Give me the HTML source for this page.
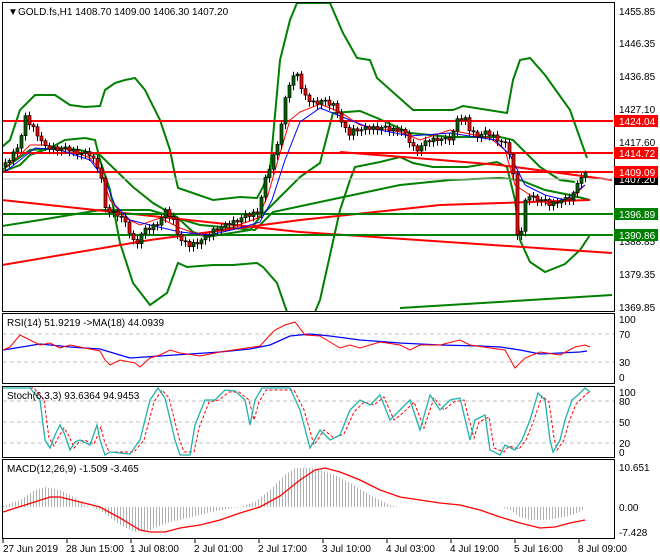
<!DOCTYPE html>
<html><head><meta charset="utf-8"><style>
html,body{margin:0;padding:0;background:#fff;width:660px;height:560px;overflow:hidden}
svg{display:block}
text{font-family:"Liberation Sans",sans-serif;font-size:10px;fill:#000}
</style></head><body>
<svg width="660" height="560" viewBox="0 0 660 560" id="s">
<defs>
<pattern id="hp" width="3" height="4" patternUnits="userSpaceOnUse"><rect x="0" y="0" width="1" height="4" fill="#b0b0b0"/></pattern>
<clipPath id="cm"><rect x="3" y="3" width="610" height="308"/></clipPath>
</defs>
<rect width="660" height="560" fill="#fff"/>
<rect x="2.5" y="2.5" width="612" height="309" fill="none" stroke="#000"/>
<rect x="2.5" y="313.5" width="612" height="70" fill="none" stroke="#000"/>
<rect x="2.5" y="386.5" width="612" height="71" fill="none" stroke="#000"/>
<rect x="2.5" y="459.5" width="612" height="79" fill="none" stroke="#000"/>

<g clip-path="url(#cm)">
<polyline fill="none" stroke="#008000" stroke-width="2" points="2,147 10,140 20,110 35,95 55,95 70,105 85,107 100,106 105,90 115,83 125,80 135,78 145,90 160,120 170,150 175,175 178,188 190,192 213,200 240,197 257,198 263,187 270,170 280,60 290,20 297,3 330,3 343,33 357,58 370,60 377,78 413,110 453,110 463,106 507,113 513,80 520,60 530,58 545,75 570,110 587,158"/>
<polyline fill="none" stroke="#008000" stroke-width="2" points="2,172 20,165 30,155 50,148 65,140 85,138 95,140 100,160 110,190 120,243 133,283 150,305 167,293 178,263 187,267 213,265 233,265 257,263 263,267 277,283 287,312 315,312 320,300 340,210 350,180 355,167 380,162 400,157 413,163 433,167 467,167 497,162 507,167 515,200 520,240 530,262 545,272 565,264 580,250 590,235"/>
<polyline fill="none" stroke="#008000" stroke-width="2" points="2,170 30,150 60,148 80,150 100,155 133,187 153,203 177,217 193,232 207,237 250,230 260,217 280,197 300,177 320,163 333,113 360,111 377,118 410,133 450,137 500,137 513,140 540,167 560,180 575,182"/>
<polyline fill="none" stroke="#008000" stroke-width="2" points="2,226 40,220 100,210 150,210 200,225 255,230 273,212 320,202 400,185 450,180 500,178 520,180 545,190 570,195 590,200"/>
<polyline fill="none" stroke="#008000" stroke-width="2" points="400,308 612,295"/>
<polyline fill="none" stroke="#f00" stroke-width="2" points="2,200 300,232 612,253"/>
<polyline fill="none" stroke="#f00" stroke-width="2" points="2,265 150,240 300,220 440,205 590,200"/>
<polyline fill="none" stroke="#f00" stroke-width="2" points="340,152 440,160 500,165 612,180"/>
<line x1="2" y1="121" x2="614" y2="121" stroke="#f00" stroke-width="2"/>
<line x1="2" y1="153" x2="614" y2="153" stroke="#f00" stroke-width="2"/>
<line x1="2" y1="172" x2="614" y2="172" stroke="#f00" stroke-width="2"/>
<line x1="2" y1="214" x2="614" y2="214" stroke="#008000" stroke-width="2"/>
<line x1="2" y1="235" x2="614" y2="235" stroke="#008000" stroke-width="2"/>
<line x1="2" y1="179" x2="614" y2="179" stroke="#c0c0c0" stroke-width="1"/>
<polyline fill="none" stroke="#f00" stroke-width="1" points="5,168 20,155 30,145 45,145 70,150 90,158 100,170 110,200 125,218 140,225 160,218 180,228 200,235 230,228 258,218 268,195 278,160 290,120 300,112 320,104 340,112 360,125 400,132 420,140 450,130 490,138 505,150 515,185 530,195 550,205 570,200 585,185"/>
<polyline fill="none" stroke="#00f" stroke-width="1" points="5,172 20,160 35,148 60,150 90,160 105,180 115,205 130,220 150,225 180,232 210,235 240,228 260,222 272,200 285,160 300,122 320,108 345,118 370,128 410,136 450,133 495,140 510,155 525,185 545,195 565,200 585,185"/>
<g id="candles"></g>
</g>
<text x="8" y="15" font-size="11">▼</text>
<text x="18" y="15">GOLD.fs,H1  1408.70 1409.00 1406.30 1407.20</text>

<text x="619" y="15">1455.85</text>
<text x="619" y="47">1446.35</text>
<text x="619" y="80">1436.85</text>
<text x="619" y="113">1427.10</text>
<text x="619" y="146">1417.60</text>
<text x="619" y="245">1388.85</text>
<text x="619" y="278">1379.35</text>
<text x="619" y="311">1369.85</text>
<rect x="614" y="115" width="44" height="12" fill="#f00"/><text x="619" y="125" style="fill:#fff">1424.04</text>
<rect x="614" y="147" width="44" height="12" fill="#f00"/><text x="619" y="157" style="fill:#fff">1414.72</text>
<rect x="614" y="173" width="44" height="12" fill="#000"/><text x="619" y="183" style="fill:#fff">1407.20</text>
<rect x="614" y="166" width="44" height="12" fill="#f00"/><text x="619" y="176" style="fill:#fff">1409.09</text>
<rect x="614" y="208" width="44" height="12" fill="#008000"/><text x="619" y="218" style="fill:#fff">1396.89</text>
<rect x="614" y="229" width="44" height="12" fill="#008000"/><text x="619" y="239" style="fill:#fff">1390.86</text>

<line x1="3" y1="334" x2="614" y2="334" stroke="#c0c0c0" stroke-dasharray="4,3"/>
<line x1="3" y1="362" x2="614" y2="362" stroke="#c0c0c0" stroke-dasharray="4,3"/>
<polyline fill="none" stroke="#00f" stroke-width="1.3" points="3,350 40,344 70,347 100,349 130,358 160,356 190,354 220,352 250,349 270,345 290,336 310,334 330,336 360,340 400,343 440,345 480,346 500,347 520,350 540,354 560,353 580,352 587,351"/>
<polyline fill="none" stroke="#f00" stroke-width="1" points="3,350 10,347 20,335 30,340 40,345 50,343 60,348 70,345 90,349 100,351 105,360 110,365 120,360 135,363 140,367 150,358 160,355 170,350 180,353 200,356 220,352 240,349 260,346 270,335 275,330 285,325 295,322 305,335 320,336 330,342 340,348 350,345 360,348 380,342 400,345 410,350 420,345 440,345 460,340 470,345 490,348 505,350 515,368 525,358 540,352 560,355 575,347 585,345 590,347"/>
<text x="7" y="326">RSI(14) 51.9219  -&gt;MA(18) 44.0939</text>
<text x="619" y="323">100</text><text x="619" y="338">70</text><text x="619" y="366">30</text><text x="619" y="381">0</text>

<line x1="3" y1="401" x2="614" y2="401" stroke="#c0c0c0" stroke-dasharray="4,3"/>
<line x1="3" y1="422" x2="614" y2="422" stroke="#c0c0c0" stroke-dasharray="4,3"/>
<line x1="3" y1="443" x2="614" y2="443" stroke="#c0c0c0" stroke-dasharray="4,3"/>
<polyline fill="none" stroke="#f00" stroke-width="1" stroke-dasharray="3,2" points="5,388 34,388 44,400 49,438 54,446 59,436 64,428 69,436 74,448 79,442 84,440 94,444 101,427 104,440 109,452 114,452 134,452 144,440 154,402 162,390 169,398 179,438 184,452 194,452 199,428 209,402 219,400 229,392 239,392 249,400 254,420 259,402 266,390 294,390 304,410 314,445 324,430 334,438 344,434 354,412 364,402 374,405 384,397 394,420 404,412 414,402 424,428 434,398 444,410 454,402 464,400 474,438 479,422 489,417 494,448 504,452 509,446 519,449 526,440 534,420 542,396 549,402 554,438 557,450 564,440 569,422 576,404 582,398 589,392"/>
<polyline fill="none" stroke="#20b2aa" stroke-width="1.3" points="3,388 30,388 40,400 45,440 50,448 55,435 60,425 65,435 70,450 75,442 80,440 90,445 97,425 100,440 105,455 110,452 130,454 140,440 150,400 158,388 165,398 175,440 180,455 190,455 195,425 205,400 215,400 225,390 235,391 245,400 250,425 255,400 262,388 290,388 300,410 310,448 320,430 330,440 340,435 350,410 360,400 370,405 380,395 390,420 400,410 410,400 420,430 430,395 440,410 450,400 460,398 470,440 475,420 485,415 490,450 500,455 505,445 515,450 522,440 530,420 538,393 545,400 550,440 553,452 560,440 565,420 572,400 578,395 585,388 590,392"/>
<text x="7" y="399">Stoch(6,3,3) 93.6364 94.9453</text>
<text x="619" y="396">100</text><text x="619" y="405">80</text><text x="619" y="426">50</text><text x="619" y="447">20</text><text x="619" y="456">0</text>

<polygon fill="url(#hp)" points="3,507 3,506 20,500 35,490 45,487 60,490 75,498 85,505 90,507 100,510 120,525 135,532 150,530 170,522 200,515 220,510 240,507 255,502 270,490 285,475 295,468 310,468 320,470 335,475 350,483 370,495 390,505 400,507 500,507 510,510 520,517 530,520 545,520 560,518 575,514 585,509 585,507"/>
<polyline fill="none" stroke="#f00" stroke-width="1.3" points="3,512 25,505 50,497 60,497 80,502 100,507 120,518 140,530 150,532 165,532 180,528 200,525 220,520 240,513 260,507 280,496 300,480 315,470 325,468 340,472 360,480 380,490 400,497 420,500 440,503 460,505 480,510 500,517 520,523 540,528 555,527 570,523 585,520"/>
<text x="7" y="472">MACD(12,26,9) -1.509 -3.465</text>
<text x="619" y="471">10.651</text><text x="619" y="511">0.00</text><text x="619" y="536">-7.428</text>

<g stroke="#000"><line x1="3" y1="539" x2="3" y2="543"/><line x1="67" y1="539" x2="67" y2="543"/><line x1="131" y1="539" x2="131" y2="543"/><line x1="195" y1="539" x2="195" y2="543"/><line x1="259" y1="539" x2="259" y2="543"/><line x1="323" y1="539" x2="323" y2="543"/><line x1="387" y1="539" x2="387" y2="543"/><line x1="451" y1="539" x2="451" y2="543"/><line x1="515" y1="539" x2="515" y2="543"/><line x1="579" y1="539" x2="579" y2="543"/></g>
<text x="3" y="552">27 Jun 2019</text>
<text x="66" y="552">28 Jun 15:00</text>
<text x="130" y="552">1 Jul 08:00</text>
<text x="194" y="552">2 Jul 01:00</text>
<text x="258" y="552">2 Jul 17:00</text>
<text x="322" y="552">3 Jul 10:00</text>
<text x="386" y="552">4 Jul 03:00</text>
<text x="450" y="552">4 Jul 19:00</text>
<text x="514" y="552">5 Jul 16:00</text>
<text x="578" y="552">8 Jul 09:00</text>
</svg>
<script>
(function(){
var P=[[5,165],[12,155],[20,140],[25,118],[30,125],[35,130],[45,148],[55,148],[70,150],[80,153],[90,155],[100,170],[105,210],[112,212],[120,215],[128,230],[135,245],[142,232],[150,228],[158,222],[165,212],[172,218],[180,240],[188,246],[196,242],[205,238],[215,228],[225,226],[240,218],[250,215],[258,210],[265,180],[270,165],[275,150],[280,130],[285,100],[290,80],[295,75],[298,70],[302,95],[308,100],[315,103],[320,100],[328,104],[335,105],[342,125],[348,135],[355,128],[362,130],[370,128],[380,127],[390,130],[400,128],[408,140],[415,150],[422,145],[430,140],[438,138],[445,140],[452,138],[456,115],[460,120],[465,120],[470,132],[478,135],[486,133],[495,137],[505,145],[510,155],[513,175],[516,230],[520,240],[524,205],[528,195],[535,198],[542,200],[550,205],[558,200],[565,200],[572,198],[576,182],[580,178],[585,175]];
function yAt(x){for(var i=1;i<P.length;i++){if(x<=P[i][0]){var a=P[i-1],b=P[i],t=(x-a[0])/(b[0]-a[0]||1);return a[1]+t*(b[1]-a[1]);}}return P[P.length-1][1];}
var g=document.getElementById('candles'),ns='http://www.w3.org/2000/svg',h='';
var prev=yAt(4);
for(var x=5;x<=585;x+=4){
 var c=yAt(x)+((x*7)%5-2)*1.2, o=prev;
 var top=Math.min(o,c),bot=Math.max(o,c); if(bot-top<1)bot=top+1;
 var wt=top-2-(x%3),wb=bot+2+((x*3)%4);
 var up=c<o;
 h+='<line x1="'+(x+0.5)+'" y1="'+wt+'" x2="'+(x+0.5)+'" y2="'+wb+'" stroke="#000" stroke-width="1"/>';
 h+='<rect x="'+(x-1)+'" y="'+top+'" width="3" height="'+(bot-top)+'" fill="'+(up?'#006400':'#f00')+'" stroke="#000" stroke-width="0.7"/>';
 prev=c;
}
g.innerHTML=h;
})();
</script>
</body></html>
